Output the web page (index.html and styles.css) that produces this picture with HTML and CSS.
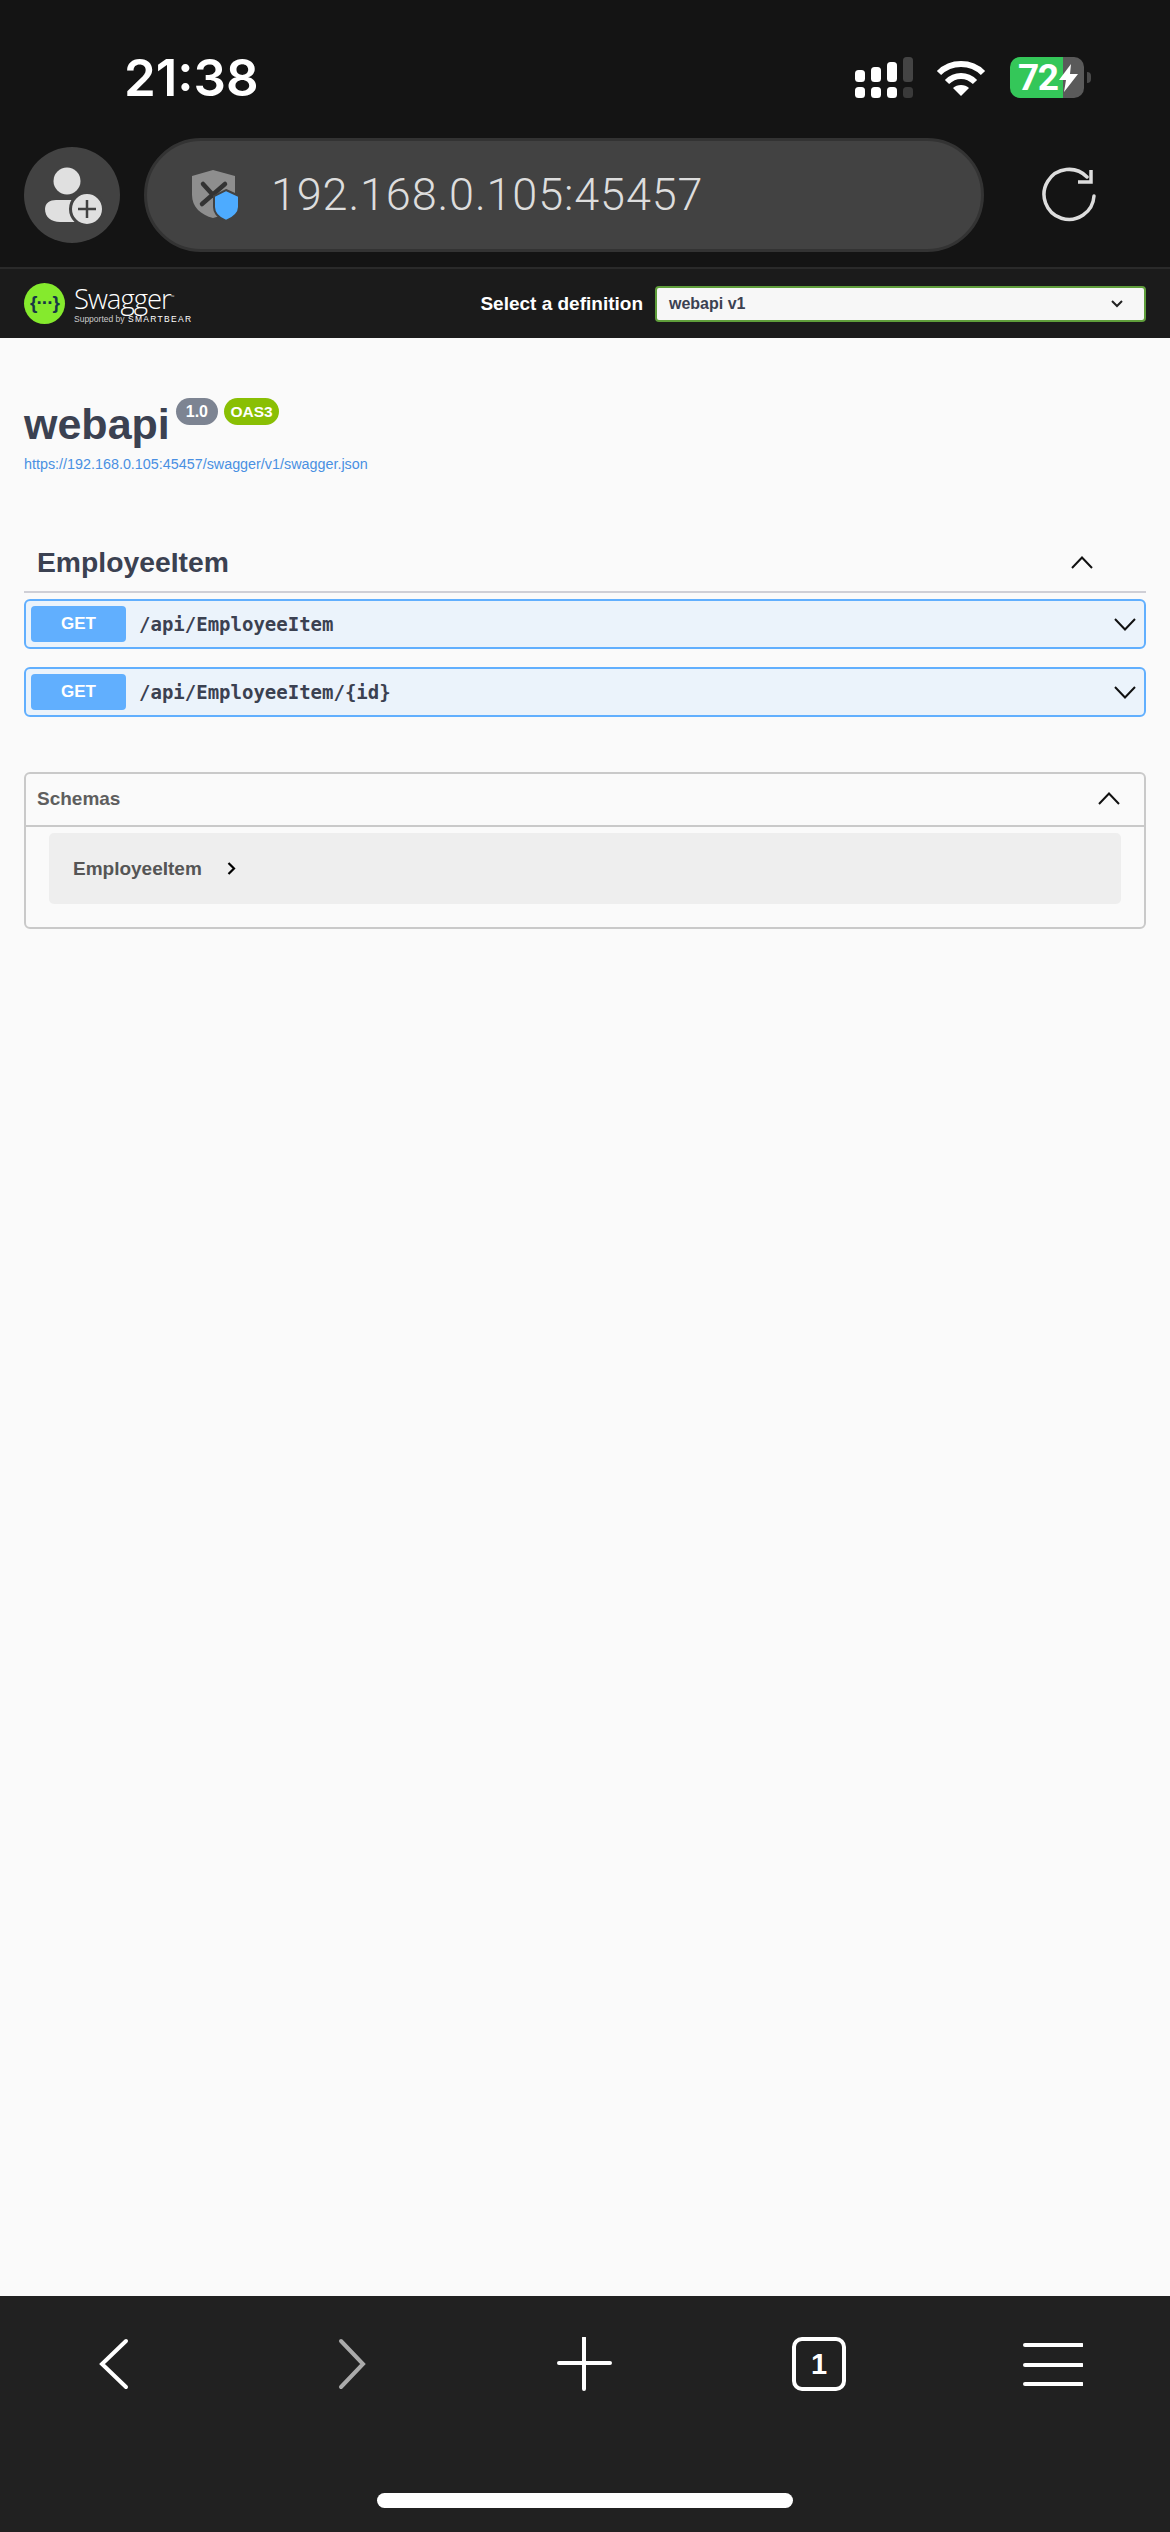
FILE: index.html
```html
<!doctype html>
<html>
    <head>
        <meta charset="utf-8">
        <title>Swagger UI</title>
        <link rel="stylesheet" href="styles.css">
    </head>
    <body>
        <div class="phone">

            <div class="chrome">
                <div class="statusbar">
                    <span class="clock">21:38</span>
                    <div class="status-icons">
                        <svg class="signal" width="58" height="41" viewBox="0 0 58 41">
                            <g fill="#fff">
                                <rect x="0" y="13" width="10" height="12" rx="3.5"/>
                                <rect x="16" y="10" width="10" height="15" rx="3.5"/>
                                <rect x="32" y="5" width="10" height="20" rx="3.5"/>
                                <rect x="0" y="30" width="10" height="11" rx="3.5"/>
                                <rect x="16" y="30" width="10" height="11" rx="3.5"/>
                                <rect x="32" y="30" width="10" height="11" rx="3.5"/>
                            </g>
                            <rect x="48" y="0" width="10" height="25" rx="3.5" fill="#444"/>
                            <rect x="48" y="30" width="10" height="11" rx="3.5" fill="#3a3a3a"/>
                        </svg>
                        <svg class="wifi" width="50" height="38" viewBox="0 0 50 38">
                            <path d="M3 14 C15 2 35 2 47 14" fill="none" stroke="#fff" stroke-width="6"/>
                            <path d="M11 23 C19 15 31 15 39 23" fill="none" stroke="#fff" stroke-width="6"/>
                            <path d="M25 37 L17 29 C21 25 29 25 33 29 Z" fill="#fff"/>
                        </svg>
                        <div class="battery">
                            <div class="battery-body">
                                <span class="battery-level">72</span>
                                <svg width="19" height="28" viewBox="0 0 19 28">
                                    <path d="M12 0 L0 16 H7 L5 28 L19 10 H11 Z" fill="#fff"/>
                                </svg>
                            </div>
                            <div class="battery-nub"></div>
                        </div>
                    </div>
                </div>

                <div class="toolbar">
                    <div class="avatar">
                        <svg width="96" height="96" viewBox="0 0 96 96">
                            <circle cx="43" cy="34" r="13.5" fill="#e0e0e0"/>
                            <path d="M21 62 C21 56 26 53 32 53 H54 C62 53 62 75 50 75 H36 C27 75 21 70 21 62 Z" fill="#e0e0e0"/>
                            <circle cx="63" cy="62" r="16.5" fill="#e0e0e0" stroke="#424242" stroke-width="3"/>
                            <path d="M63 53 V71 M54 62 H72" stroke="#424242" stroke-width="2.5" fill="none"/>
                        </svg>
                    </div>
                    <div class="urlbar">
                        <svg class="shield" width="52" height="52" viewBox="0 0 52 52">
                            <path d="M3 7 L24 1 L46 7 V26 C46 38 36 46 24 49 C12 46 3 38 3 26 Z" fill="#8e8e8e"/>
                            <path d="M14 15 L34 37 M36 15 L13 35" stroke="#333" stroke-width="4.5" stroke-linecap="round" fill="none"/>
                            <path d="M37 21 L50 27 V38 C50 45 44 49 37 52 C30 49 25 45 25 38 V27 Z" fill="#4dabff" stroke="#424242" stroke-width="2"/>
                        </svg>
                        <span class="url">192.168.0.105:45457</span>
                    </div>
                    <svg class="reload" width="56" height="56" viewBox="0 0 56 56">
                        <path d="M46 10 A25 25 0 1 0 53 29" fill="none" stroke="#ddd" stroke-width="3.5" stroke-linecap="round"/>
                        <path d="M50 3 V15 H37" fill="none" stroke="#ddd" stroke-width="3.5"/>
                    </svg>
                </div>
            </div>

            <div class="topbar">
                <div class="logo">
                    <div class="logo-mark">{···}</div>
                    <div class="logo-text">
                        <div class="logo-name">Swagger<sup>™</sup></div>
                        <div class="logo-sub">Supported by <span class="logo-smartbear">SMARTBEAR</span></div>
                    </div>
                </div>
                <div class="definition">
                    <span class="definition-label">Select a definition</span>
                    <div class="definition-select">
                        <span>webapi v1</span>
                        <svg class="select-arrow" width="14" height="9" viewBox="0 0 14 9">
                            <path d="M2 2 L7 7 L12 2" fill="none" stroke="#222" stroke-width="2"/>
                        </svg>
                    </div>
                </div>
            </div>

            <div class="content">
                <div class="info">
                    <div class="info-title">
                        <h1>webapi</h1>
                        <span class="badge badge-version">1.0</span>
                        <span class="badge badge-oas">OAS3</span>
                    </div>
                    <a class="info-link">https://192.168.0.105:45457/swagger/v1/swagger.json</a>
                </div>

                <div class="tag">
                    <h3>EmployeeItem</h3>
                    <svg class="chevron tag-chevron" width="22" height="13" viewBox="0 0 22 13">
                        <path d="M1 12 L11 1.5 L21 12" />
                    </svg>
                </div>

                <div class="opblock">
                    <span class="method">GET</span>
                    <span class="path">/api/EmployeeItem</span>
                    <svg class="chevron" width="22" height="13" viewBox="0 0 22 13">
                        <path d="M1 1 L11 11.5 L21 1" />
                    </svg>
                </div>
                <div class="opblock">
                    <span class="method">GET</span>
                    <span class="path">/api/EmployeeItem/{id}</span>
                    <svg class="chevron" width="22" height="13" viewBox="0 0 22 13">
                        <path d="M1 1 L11 11.5 L21 1" />
                    </svg>
                </div>

                <div class="schemas">
                    <div class="schemas-head">
                        <h4>Schemas</h4>
                        <svg class="chevron" width="22" height="13" viewBox="0 0 22 13">
                            <path d="M1 12 L11 1.5 L21 12" />
                        </svg>
                    </div>
                    <div class="schemas-body">
                        <div class="model">
                            <span>EmployeeItem</span>
                            <svg width="9" height="13" viewBox="0 0 9 13">
                                <path d="M1.5 1 L7 6.5 L1.5 12" fill="none" stroke="#000" stroke-width="2.2"/>
                            </svg>
                        </div>
                    </div>
                </div>
            </div>

            <div class="bottombar">
                <div class="nav">
                    <svg width="60" height="54" viewBox="0 0 60 54">
                        <path d="M39 4 L15 27 L39 50" class="nav-line"/>
                    </svg>
                    <svg width="60" height="54" viewBox="0 0 60 54">
                        <path d="M20 4 L42 27 L20 50" class="nav-line nav-off"/>
                    </svg>
                    <svg width="60" height="54" viewBox="0 0 60 54">
                        <path d="M29 1 V52 M4 26 H55" class="nav-line"/>
                    </svg>
                    <svg width="60" height="54" viewBox="0 0 60 54">
                        <rect x="5" y="2" width="50" height="50" rx="8" class="nav-line"/>
                        <text x="30" y="37" class="nav-count">1</text>
                    </svg>
                    <svg width="60" height="54" viewBox="0 0 60 54">
                        <path d="M2 8 H59 M2 28 H59 M2 47 H59" class="nav-line"/>
                    </svg>
                </div>
                <div class="homebar"></div>
            </div>

        </div>
    </body>
</html>
```

FILE: styles.css
```css
html, body {
    margin: 0;
    padding: 0;
}
body {
    font-family: "Liberation Sans", Arial, sans-serif;
    background: #fafafa;
    color: #3b4151;
}
svg {
    display: block;
    flex: none;
}
.phone {
    display: flex;
    flex-direction: column;
    width: 1170px;
    height: 2532px;
    overflow: hidden;
}

/* browser chrome */
.chrome {
    background: #141414;
    height: 267px;
}
.statusbar {
    display: flex;
    justify-content: space-between;
    align-items: center;
    box-sizing: border-box;
    height: 137px;
    padding: 18px 79px 0 124px;
}
.clock {
    font-family: Inter, sans-serif;
    font-weight: 600;
    font-size: 51px;
    line-height: 41px;
    color: #fff;
}
.status-icons {
    display: flex;
    align-items: center;
}
.wifi {
    margin-left: 23px;
}
.battery {
    display: flex;
    align-items: center;
    margin-left: 24px;
}
.battery-body {
    display: flex;
    align-items: center;
    box-sizing: border-box;
    width: 74px;
    height: 41px;
    padding-left: 8px;
    border-radius: 10px;
    background: linear-gradient(90deg, #34c759 0, #34c759 53px, #5a5a5a 53px);
}
.battery-level {
    font-family: Roboto, sans-serif;
    font-weight: 700;
    font-size: 37px;
    line-height: 41px;
    letter-spacing: -1.5px;
    color: #fff;
}
.battery-body svg {
    margin-left: 2px;
}
.battery-nub {
    width: 4px;
    height: 11px;
    margin-left: 3px;
    border-radius: 0 4px 4px 0;
    background: #4a4a4a;
}
.toolbar {
    display: flex;
    align-items: center;
    height: 116px;
    padding: 0 0 0 24px;
}
.avatar {
    width: 96px;
    height: 96px;
    border-radius: 50%;
    background: #424242;
}
.urlbar {
    display: flex;
    align-items: center;
    box-sizing: border-box;
    width: 840px;
    height: 114px;
    margin-left: 24px;
    padding: 0 0 2px 42px;
    border: 3px solid #333;
    border-radius: 57px;
    background: #424242;
}
.shield {
    margin-top: 2px;
}
.url {
    margin-left: 30px;
    font-family: Roboto, sans-serif;
    font-weight: 300;
    font-size: 45px;
    letter-spacing: 0.85px;
    color: #ddd;
}
.reload {
    margin-left: 57px;
}

/* swagger top bar */
.topbar {
    display: flex;
    justify-content: space-between;
    align-items: center;
    box-sizing: border-box;
    height: 71px;
    padding: 0 24px;
    background: #1b1b1b;
    border-top: 2px solid #2a2a2a;
}
.logo {
    display: flex;
    align-items: center;
}
.logo-mark {
    width: 41px;
    height: 41px;
    border-radius: 50%;
    background: #85ea2d;
    color: #173647;
    font-size: 19px;
    font-weight: bold;
    line-height: 39px;
    text-align: center;
    letter-spacing: -1px;
}
.logo-text {
    margin-left: 9px;
    color: #fff;
}
.logo-name {
    font-family: "Open Sans", sans-serif;
    font-weight: 300;
    font-size: 27.5px;
    line-height: 31px;
    letter-spacing: -1px;
}
.logo-name sup {
    font-size: 5px;
    letter-spacing: 0;
}
.logo-sub {
    font-size: 8.5px;
    line-height: 11px;
    color: #ccc;
}
.logo-smartbear {
    margin-left: 1px;
    font-size: 8.5px;
    font-weight: normal;
    letter-spacing: 1.3px;
    color: #fff;
}
.definition {
    display: flex;
    align-items: center;
}
.definition-label {
    font-size: 19px;
    font-weight: bold;
    color: #fff;
}
.definition-select {
    display: flex;
    justify-content: space-between;
    align-items: center;
    box-sizing: border-box;
    width: 491px;
    height: 36px;
    margin-left: 12px;
    padding: 0 20px 0 12px;
    border: 2px solid #5f9e3b;
    border-radius: 4px;
    background: #f7f7f7;
    font-size: 16px;
    font-weight: bold;
    color: #3b4151;
}

/* page */
.content {
    flex: 1;
    padding: 0 24px;
    background: #fafafa;
}
.info {
    padding-top: 60px;
}
.info-title {
    display: flex;
    align-items: flex-start;
}
.info-title h1 {
    margin: 0 6px 0 0;
    font-size: 43px;
    line-height: 53px;
    font-weight: bold;
    color: #3b4151;
}
.badge {
    height: 27px;
    border-radius: 14px;
    font-weight: bold;
    line-height: 27px;
    color: #fff;
}
.badge-version {
    padding: 0 10px;
    background: #7d8492;
    font-size: 16px;
}
.badge-oas {
    margin-left: 6px;
    padding: 0 6.5px;
    background: #89bf04;
    font-size: 15.5px;
}
.info-link {
    display: block;
    margin-top: 3px;
    font-size: 14.35px;
    line-height: 20px;
    color: #4990e2;
}
.tag {
    display: flex;
    justify-content: space-between;
    align-items: center;
    box-sizing: border-box;
    height: 60px;
    margin-top: 59px;
    padding: 0 53px 0 13px;
    border-bottom: 2px solid #cfcfd6;
}
.tag h3 {
    margin: 0;
    font-size: 28.3px;
    font-weight: bold;
    color: #3b4151;
}
.opblock {
    display: flex;
    align-items: center;
    box-sizing: border-box;
    height: 50px;
    margin-top: 18px;
    padding: 0 8px 0 5px;
    border: 2px solid #61affe;
    border-radius: 6px;
    background: #ebf3fb;
}
.tag + .opblock {
    margin-top: 6px;
}
.method {
    width: 95px;
    height: 36px;
    border-radius: 4px;
    background: #61affe;
    font-size: 17px;
    font-weight: bold;
    line-height: 36px;
    text-align: center;
    color: #fff;
}
.path {
    flex: 1;
    margin-left: 13px;
    font-family: "DejaVu Sans Mono", monospace;
    font-size: 19px;
    font-weight: bold;
    color: #3b4151;
}
.chevron path {
    fill: none;
    stroke: #111;
    stroke-width: 2;
}
.schemas {
    box-sizing: border-box;
    height: 157px;
    margin-top: 55px;
    border: 2px solid #c9c9c9;
    border-radius: 6px;
}
.schemas-head {
    display: flex;
    justify-content: space-between;
    align-items: center;
    box-sizing: border-box;
    height: 53px;
    padding: 0 24px 2px 11px;
    border-bottom: 2px solid #c9c9c9;
}
.schemas-head h4 {
    margin: 0;
    font-size: 19px;
    font-weight: bold;
    color: #5e5e5e;
}
.schemas-body {
    padding: 6px 23px 0;
}
.model {
    display: flex;
    align-items: center;
    box-sizing: border-box;
    height: 71px;
    padding-left: 24px;
    border-radius: 5px;
    background: #eee;
    font-size: 19px;
    font-weight: bold;
    color: #555;
}
.model svg {
    margin-left: 25px;
}

/* browser bottom bar */
.bottombar {
    height: 236px;
    background: #212121;
}
.nav {
    display: grid;
    grid-template-columns: repeat(5, 234px);
    justify-items: center;
    padding-top: 41px;
}
.nav-line {
    fill: none;
    stroke: #fff;
    stroke-width: 4;
    stroke-linecap: round;
}
.nav-off {
    stroke: #aaa;
}
.nav-count {
    fill: #fff;
    font-size: 29px;
    font-weight: bold;
    text-anchor: middle;
}
.homebar {
    width: 416px;
    height: 15px;
    margin: 102px auto 0;
    border-radius: 8px;
    background: #fff;
}
```
